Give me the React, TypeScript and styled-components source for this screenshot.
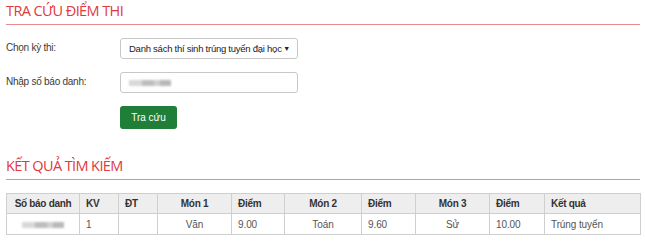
import styled, { createGlobalStyle } from 'styled-components';

const GlobalStyle = createGlobalStyle`
  body {
    margin: 0;
    background: #fff;
    font-family: 'Liberation Sans', Arial, sans-serif;
    color: #333;
  }
`;

const Page = styled.div`
  padding: 2px 5px 0 6px;
`;

const SectionTitle = styled.h2`
  margin: 0;
  font-family: 'Open Sans', sans-serif;
  font-weight: 400;
  font-size: 14.5px;
  letter-spacing: -0.6px;
  color: #e0393e;
  line-height: 18px;
  padding-bottom: 4px;
  border-bottom: 1px solid #e88a8c;
`;

const Form = styled.div`
  display: grid;
  grid-template-columns: 114px 178px;
  row-gap: 13px;
  padding-top: 13px;
  align-items: center;
`;

const Label = styled.label`
  font-size: 10px;
  letter-spacing: -0.25px;
  color: #3a3a3a;
  align-self: start;
  padding-top: 4px;
`;

const Field = styled.div`
  height: 21px;
  border: 1px solid #c8c8c8;
  border-radius: 3px;
  box-sizing: border-box;
  display: flex;
  align-items: center;
  padding: 0 7px 0 8px;
  font-size: 9.5px;
  letter-spacing: -0.25px;
  white-space: nowrap;
  color: #222;
  justify-content: space-between;
`;

const Caret = styled.span`
  font-size: 7px;
  color: #222;
`;

const Blur = styled.span<{ w: number }>`
  display: inline-block;
  width: ${p => p.w}px;
  height: 6px;
  background: linear-gradient(90deg, #d8d8d8 0 30%, #bdbdbd 30% 60%, #d0d0d0 60% 75%, #b8b8b8 75% 100%);
  filter: blur(1px);
`;

const Button = styled.button`
  grid-column: 2;
  width: 57px;
  height: 23px;
  border: none;
  border-radius: 3px;
  background: #1f7e38;
  color: #fff;
  font-family: 'Liberation Sans', Arial, sans-serif;
  font-size: 10px;
  padding: 0;
`;

const Results = styled.div`
  padding-top: 28px;
`;

const Table = styled.table`
  margin-top: 13px;
  width: 634px;
  border-collapse: collapse;
  font-size: 10px;
  letter-spacing: -0.1px;
  table-layout: fixed;
`;

const Th = styled.th<{ center?: boolean }>`
  background: #eeeeee;
  border: 1px solid #cfcfcf;
  height: 19px;
  padding: 0 6px;
  font-size: 10px;
  letter-spacing: -0.3px;
  font-weight: 700;
  color: #333;
  white-space: nowrap;
  text-align: ${p => (p.center ? 'center' : 'left')};
`;

const Td = styled.td<{ center?: boolean }>`
  border: 1px solid #cfcfcf;
  height: 20px;
  padding: 0 6px;
  color: #555555;
  white-space: nowrap;
  text-align: ${p => (p.center ? 'center' : 'left')};
`;

const columns = [
  { name: 'Số báo danh', w: 73, center: true },
  { name: 'KV', w: 39 },
  { name: 'ĐT', w: 39 },
  { name: 'Món 1', w: 74, center: true },
  { name: 'Điểm', w: 53 },
  { name: 'Món 2', w: 77, center: true },
  { name: 'Điểm', w: 54 },
  { name: 'Món 3', w: 74, center: true },
  { name: 'Điểm', w: 55 },
  { name: 'Kết quả', w: 96 },
];

const row = ['', '1', '', 'Văn', '9.00', 'Toán', '9.60', 'Sử', '10.00', 'Trúng tuyển'];

export default function App() {
  return (
    <>
      <GlobalStyle />
      <Page>
        <SectionTitle>TRA CỨU ĐIỂM THI</SectionTitle>
        <Form>
          <Label>Chọn kỳ thi:</Label>
          <Field>
            Danh sách thí sinh trúng tuyển đại học
            <Caret>▼</Caret>
          </Field>
          <Label>Nhập số báo danh:</Label>
          <Field>
            <Blur w={42} />
          </Field>
          <Button>Tra cứu</Button>
        </Form>

        <Results>
          <SectionTitle>KẾT QUẢ TÌM KIẾM</SectionTitle>
          <Table>
            <colgroup>
              {columns.map((c, i) => (
                <col key={i} style={{ width: c.w }} />
              ))}
            </colgroup>
            <thead>
              <tr>
                {columns.map((c, i) => (
                  <Th key={i} center={c.center}>{c.name}</Th>
                ))}
              </tr>
            </thead>
            <tbody>
              <tr>
                {row.map((v, i) => (
                  <Td key={i} center={columns[i].center}>
                    {i === 0 ? <Blur w={42} /> : v}
                  </Td>
                ))}
              </tr>
            </tbody>
          </Table>
        </Results>
      </Page>
    </>
  );
}
